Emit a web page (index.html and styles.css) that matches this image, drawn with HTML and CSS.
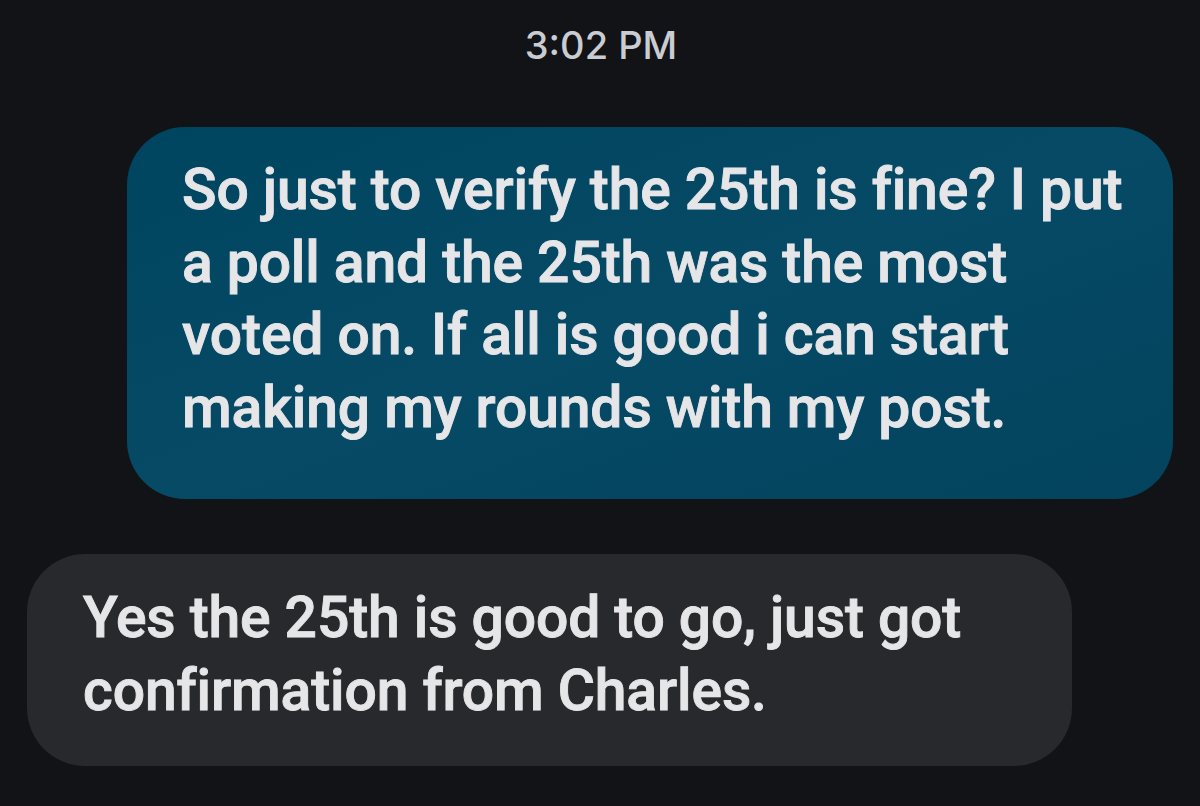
FILE: index.html
```html
<!DOCTYPE html>
<html lang="en">
<head>
<meta charset="utf-8">
<title>Messages</title>
<link rel="stylesheet" href="styles.css">
</head>
<body>
<main class="thread">
  <div class="timestamp">3:02 PM</div>
  <div class="row row-out">
    <div class="bubble bubble-out">So just to verify the 25th is fine? I put<br>a poll and the 25th was the most<br>voted on. If all is good i can start<br>making my rounds with my post.</div>
  </div>
  <div class="row row-in">
    <div class="bubble bubble-in">Yes the 25th is good to go, just got<br>confirmation from Charles.</div>
  </div>
</main>
</body>
</html>
```
FILE: styles.css
```css
html, body {
  margin: 0;
  padding: 0;
  background: #111317;
  height: 100%;
}
body {
  font-family: Roboto, "Open Sans", sans-serif;
  color: #e6e6e8;
}
.thread {
  display: flex;
  flex-direction: column;
  padding: 0 27px;
}
.timestamp {
  text-align: center;
  font-family: Inter, Roboto, sans-serif;
  font-size: 38px;
  font-weight: 500;
  color: #c9ccd1;
  padding-top: 22px;
  height: 127px;
  box-sizing: border-box;
  padding-left: 2px;
}
.row {
  display: flex;
}
.row-out {
  justify-content: flex-end;
}
.row-in {
  justify-content: flex-start;
  margin-top: 55px;
}
.bubble {
  box-sizing: border-box;
  border-radius: 58px;
  font-size: 57px;
  font-weight: 500;
  line-height: 72.5px;
  letter-spacing: -0.1px;
  white-space: nowrap;
  -webkit-text-stroke: 0.9px #e6e6e8;
}
.bubble-out {
  width: 1046px;
  height: 372px;
  background: linear-gradient(160deg, #004560 0%, #064a66 50%, #03435d 100%);
  padding: 27px 40px 0 55px;
}
.bubble-in {
  width: 1045px;
  height: 212px;
  background: #28292c;
  padding: 28px 40px 0 56px;
}
```
